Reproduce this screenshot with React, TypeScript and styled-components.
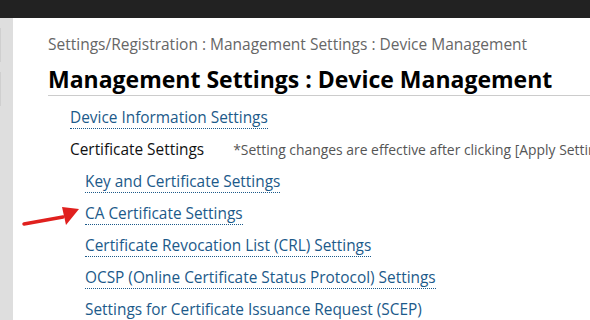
import React from "react";
import styled, { createGlobalStyle } from "styled-components";

const GlobalStyle = createGlobalStyle`
  html, body {
    margin: 0;
    padding: 0;
    background: #fff;
  }
  body {
    font-family: "Open Sans", "Noto Sans", "Liberation Sans", sans-serif;
  }
`;

const Page = styled.div`
  width: 590px;
  height: 320px;
  overflow: hidden;
  display: flex;
  flex-direction: column;
  position: relative;
`;

const TopBar = styled.div`
  height: 18px;
  background: #222222;
  flex-shrink: 0;
`;

const Body = styled.div`
  display: flex;
  flex: 1;
`;

const Sidebar = styled.div`
  width: 13px;
  background: #dedede;
  flex-shrink: 0;
  display: flex;
  flex-direction: column;
  gap: 10px;
  padding-top: 10px;
`;

const SideTab = styled.div`
  width: 1px;
  height: 34px;
  background: #cfcfcf;
`;

const Main = styled.div`
  flex: 1;
  padding: 16px 0 0 35px;
  white-space: nowrap;
`;

const Breadcrumb = styled.div`
  font-size: 15.5px;
  color: #666;
  line-height: 20px;
`;

const Title = styled.h1`
  margin: 9px 0 0;
  font-size: 23px;
  font-weight: 700;
  color: #000;
  line-height: 32px;
  border-bottom: 1px solid #cccccc;
`;

const List = styled.div`
  display: flex;
  flex-direction: column;
  gap: 10px;
  padding-top: 12px;
`;

const Row = styled.div<{ $indent?: boolean }>`
  padding-left: ${(p) => (p.$indent ? 37 : 22)}px;
  height: 22px;
  display: flex;
  align-items: baseline;
  font-size: 15.4px;
  line-height: 20px;
`;

const Link = styled.a`
  color: #1c5a8a;
  text-decoration: none;
  border-bottom: 1px dotted #1c5a8a;
`;

const Label = styled.span`
  color: #111;
`;

const Note = styled.span`
  color: #555;
  font-size: 13.9px;
  margin-left: 29px;
`;

const Arrow = styled.svg`
  position: absolute;
  left: 20px;
  top: 204px;
`;

const subLinks = [
  "Key and Certificate Settings",
  "CA Certificate Settings",
  "Certificate Revocation List (CRL) Settings",
  "OCSP (Online Certificate Status Protocol) Settings",
  "Settings for Certificate Issuance Request (SCEP)",
];

export default function App() {
  return (
    <Page>
      <GlobalStyle />
      <TopBar />
      <Body>
        <Sidebar>
          <SideTab />
          <SideTab />
        </Sidebar>
        <Main>
          <Breadcrumb>
            Settings/Registration : Management Settings : Device Management
          </Breadcrumb>
          <Title>Management Settings : Device Management</Title>
          <List>
            <Row>
              <Link>Device Information Settings</Link>
            </Row>
            <Row>
              <Label>Certificate Settings</Label>
              <Note>
                *Setting changes are effective after clicking [Apply Setting
                Changes].
              </Note>
            </Row>
            {subLinks.map((s) => (
              <Row key={s} $indent>
                <Link>{s}</Link>
              </Row>
            ))}
          </List>
        </Main>
      </Body>
      <Arrow width="62" height="26" viewBox="0 0 62 26">
        <path d="M4 20 L43 13" stroke="#e0201e" strokeWidth="3.5" strokeLinecap="round" />
        <path d="M59 5 L42 3 L46 21 Z" fill="#e0201e" />
      </Arrow>
    </Page>
  );
}
